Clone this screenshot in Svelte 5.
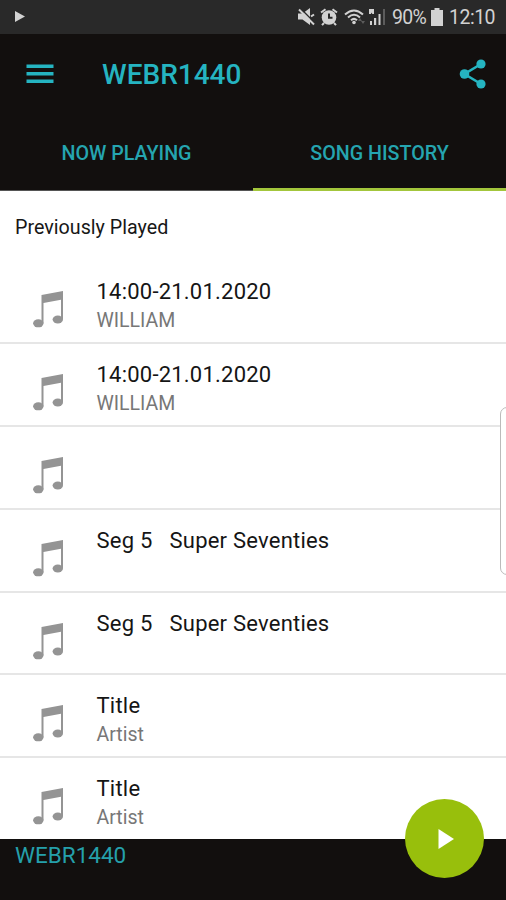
<script>
	let activeTab = $state('history');

	const station = 'WEBR1440';

	const tabs = [
		{ id: 'playing', label: 'Now Playing' },
		{ id: 'history', label: 'Song History' }
	];

	const songs = [
		{ title: '14:00-21.01.2020', artist: 'WILLIAM' },
		{ title: '14:00-21.01.2020', artist: 'WILLIAM' },
		{ title: '', artist: '' },
		{ title: 'Seg 5   Super Seventies', artist: '' },
		{ title: 'Seg 5   Super Seventies', artist: '' },
		{ title: 'Title', artist: 'Artist' },
		{ title: 'Title', artist: 'Artist' }
	];
</script>

<div class="screen">
	<div class="status-bar">
		<svg class="status-play" width="12" height="14" viewBox="0 0 12 14">
			<path d="M1 1l10 5.500L1 12z" />
		</svg>
		<div class="status-right">
			<svg class="mute" width="17" height="18" viewBox="0 0 17 18">
				<path d="M0 5.500h4.500L12 0v17l-7.500-5.500H0z" />
				<path class="slash-gap" d="M2.500 .5l14 14" />
				<path class="slash" d="M1 1.500l15 15" />
				<path class="slash" d="M13 8.500l3-2" />
			</svg>
			<svg class="alarm" width="18" height="18" viewBox="0 0 18 18">
				<circle cx="9" cy="9.500" r="7.300" />
				<path class="bells" d="M1 4.500l4.500-3.300M12.500 1.200L17 4.500M4 15l-2 2.200M14 15l2 2.200" />
				<path class="hands" d="M9 5.500v4.200h3.500" />
			</svg>
			<svg class="wifi" width="22" height="18" viewBox="0 0 22 18">
				<path class="arc" d="M1 6.500q9-8 18 0M4 9.500q6-5.500 12 0M7 12.300q3-2.800 6 0" />
				<circle cx="10" cy="14.500" r="1.800" />
				<path class="dim" d="M14 13l2-3 2 3zM17 13h4l-2 3z" />
			</svg>
			<svg class="signal" width="17" height="18" viewBox="0 0 17 18">
				<path d="M0 1h5v5H3.500L2 4.500V6H0zM1 13h2v4H1zM5 10h2.200v7H5zM9.500 6h2v11h-2z" />
				<path class="dim" d="M14 1h2v16h-2z" />
			</svg>
			<span class="percent">90%</span>
			<svg class="battery" width="12" height="18" viewBox="0 0 12 18">
				<path d="M3.500 0h5v2H12v16H0V2h3.500z" />
			</svg>
			<span class="clock">12:10</span>
		</div>
	</div>

	<header>
		<button class="menu" aria-label="Menu">
			<svg width="28" height="20" viewBox="0 0 28 20">
				<path d="M.5 .5h27v3.500H.5zM.5 8h27v3.500H.5zM.5 15.500h27V19H.5z" />
			</svg>
		</button>
		<h1>{station}</h1>
		<button class="share" aria-label="Share">
			<svg width="28" height="30" viewBox="0 0 28 30">
				<path class="link" d="M22 5L5.500 15 22 25" />
				<circle cx="22" cy="5" r="4.600" />
				<circle cx="5.500" cy="15" r="4.800" />
				<circle cx="22" cy="25" r="4.600" />
			</svg>
		</button>
	</header>

	<nav>
		{#each tabs as tab (tab.id)}
			<button class="tab" class:active={activeTab === tab.id} onclick={() => (activeTab = tab.id)}>
				{tab.label}
			</button>
		{/each}
	</nav>

	<main>
		<h2>Previously Played</h2>
		<ul>
			{#each songs as song}
				<li>
					<svg class="note" width="31" height="37" viewBox="0 0 31 37">
						<path d="M8.500 4L30 0v28h-2V8.700L10.500 12V32h-2z" />
						<ellipse cx="5.300" cy="32.300" rx="5.200" ry="4" />
						<ellipse cx="24.800" cy="28.500" rx="5.200" ry="4" />
					</svg>
					<div class="song">
						<span class="title">{song.title}</span>
						<span class="artist">{song.artist}</span>
					</div>
				</li>
			{/each}
		</ul>
		<div class="edge-handle"></div>
	</main>

	<footer>
		<span>{station}</span>
		<button class="fab" aria-label="Play">
			<svg width="16" height="20" viewBox="0 0 16 20">
				<path d="M.5 0L16 10 .5 20z" />
			</svg>
		</button>
	</footer>
</div>

<style>
	:global(body) {
		background: #fff;
	}

	.screen {
		position: relative;
		display: flex;
		flex-direction: column;
		width: 506px;
		height: 900px;
		overflow: hidden;
		font-family: Roboto, 'Liberation Sans', sans-serif;
	}

	button {
		border: 0;
		padding: 0;
		background: none;
		font-family: inherit;
	}

	svg {
		display: block;
		flex: none;
	}

	.status-bar {
		display: flex;
		justify-content: space-between;
		box-sizing: border-box;
		height: 34px;
		padding: 0 11px 0 14px;
		background: #292929;
		color: #d2d2d2;
		fill: #d2d2d2;
	}

	.status-play {
		margin-top: 10px;
	}

	.status-right {
		display: flex;
		align-items: center;
		font-size: 19.5px;
	}

	.slash,
	.slash-gap,
	.bells,
	.hands,
	.arc {
		fill: none;
		stroke: #d2d2d2;
		stroke-width: 2;
	}

	.slash-gap,
	.hands {
		stroke: #292929;
	}

	.slash-gap {
		stroke-width: 1.5;
	}

	.dim {
		fill: #5c5c5c;
	}

	.alarm {
		margin-left: 5px;
	}

	.wifi {
		margin-left: 6px;
	}

	.signal {
		margin-left: 3px;
	}

	.percent {
		width: 34px;
		margin-left: 6px;
		letter-spacing: -0.7px;
	}

	.battery {
		margin-left: 5px;
	}

	.clock {
		width: 46px;
		margin-left: 6px;
		letter-spacing: -0.5px;
	}

	header {
		display: flex;
		align-items: center;
		box-sizing: border-box;
		height: 80px;
		padding: 0 19px 0 26px;
		background: #120f0e;
		fill: #25b4c1;
	}

	h1 {
		flex: 1;
		margin: 0 0 0 48px;
		color: #25b4c1;
		font-size: 28px;
		font-weight: 500;
	}

	.link {
		fill: none;
		stroke: #25b4c1;
		stroke-width: 2.6;
	}

	nav {
		display: flex;
		height: 77px;
		background: #120f0e;
	}

	.tab {
		flex: 1;
		box-sizing: border-box;
		padding-top: 3px;
		border-bottom: 1px solid #555;
		color: #25a5b0;
		font-size: 19.7px;
		font-weight: 500;
		text-transform: uppercase;
	}

	.tab.active {
		padding-top: 5px;
		border-bottom: 3px solid #a3c63c;
	}

	main {
		flex: 1;
		position: relative;
		min-height: 0;
		overflow: hidden;
		background: #fff;
	}

	h2 {
		box-sizing: border-box;
		height: 70px;
		margin: 0;
		padding: 25px 0 0 15px;
		color: #171717;
		font-size: 19.7px;
		font-weight: 400;
		line-height: 24px;
	}

	ul {
		margin: 0;
		padding: 0;
		list-style: none;
	}

	li {
		display: flex;
		box-sizing: border-box;
		height: 82.9px;
		padding: 17px 0 0 32.5px;
		border-bottom: 2px solid #e6e6e6;
	}

	.note {
		margin-top: 13px;
		fill: #949494;
	}

	.song {
		display: flex;
		flex-direction: column;
		margin-left: 33px;
	}

	.title {
		height: 29px;
		color: #151515;
		font-size: 22px;
		line-height: 27px;
		letter-spacing: 0.22px;
		white-space: pre;
	}

	.artist {
		color: #777;
		font-size: 19.5px;
		line-height: 27px;
	}

	.edge-handle {
		position: absolute;
		top: 216px;
		right: -10px;
		width: 14px;
		height: 166px;
		border: 1px solid #bbb;
		border-radius: 7px;
		background: #fff;
	}

	footer {
		box-sizing: border-box;
		height: 61px;
		padding: 3px 15px;
		background: #120f0e;
		color: #25a0ab;
		font-size: 22.5px;
		line-height: 26px;
	}

	.fab {
		position: absolute;
		right: 22px;
		bottom: 22px;
		display: flex;
		align-items: center;
		justify-content: center;
		width: 79px;
		height: 79px;
		padding-left: 3px;
		border-radius: 50%;
		background: #98bf0c;
		fill: #fff;
	}
</style>
